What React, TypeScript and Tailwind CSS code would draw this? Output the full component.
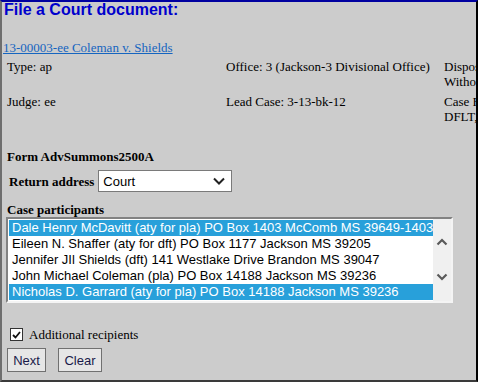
import React from 'react';

const participants = [
  { text: 'Dale Henry McDavitt (aty for pla) PO Box 1403 McComb MS 39649-1403', selected: true },
  { text: 'Eileen N. Shaffer (aty for dft) PO Box 1177 Jackson MS 39205', selected: false },
  { text: 'Jennifer JIl Shields (dft) 141 Westlake Drive Brandon MS 39047', selected: false },
  { text: 'John Michael Coleman (pla) PO Box 14188 Jackson MS 39236', selected: false },
  { text: 'Nicholas D. Garrard (aty for pla) PO Box 14188 Jackson MS 39236', selected: true },
];

const serif = "font-['Liberation_Serif','Times_New_Roman',serif]";
const sans = "font-['Liberation_Sans',Arial,sans-serif]";

export default function App() {
  return (
    <div className="w-[478px] h-[382px] bg-[#cccccc] border-t-2 border-t-[#0000a0] border-l-2 border-l-[#6e6e6e] border-r-2 border-r-black border-b-2 border-b-[#3a3a3a] overflow-hidden text-black">
      <h1 className={`${sans} text-[16px] leading-[16px] font-bold text-[#0000cc] pl-[2px]`}>
        File a Court document:
      </h1>

      <div className={`${serif} text-[13px] leading-[15px]`}>
        <a href="#" className="block mt-[22px] pl-[1px] text-[#1565c0] underline">
          13-00003-ee Coleman v. Shields
        </a>

        <div className="mt-[4px] pl-[5px] grid grid-cols-[219px_218px_219px] w-[700px] gap-y-[5px]">
          <div>Type: ap</div>
          <div>Office: 3 (Jackson-3 Divisional Office)</div>
          <div className="w-[140px]">Disposition: Dismissed Without</div>
          <div>Judge: ee</div>
          <div>Lead Case: 3-13-bk-12</div>
          <div className="w-[90px]">Case Flags: DFLT, CLOSED</div>
        </div>

        <div className="mt-[25px] pl-[5px] font-bold">Form AdvSummons2500A</div>

        <div className="mt-[6px] pl-[7px] flex items-center gap-[4px]">
          <span className="font-bold">Return address</span>
          <div className={`${sans} w-[134px] h-[22px] bg-white border border-[#7a7a7a] flex items-center justify-between pl-[4px] pr-[6px] text-[13px]`}>
            <span>Court</span>
            <svg width="12" height="8" viewBox="0 0 12 8">
              <path d="M1 1.5 L6 6.5 L11 1.5" fill="none" stroke="#222" strokeWidth="2" />
            </svg>
          </div>
        </div>

        <div className="mt-[10px] pl-[5px] font-bold">Case participants</div>

        <div className="ml-[4px] w-[447px] h-[86px] border-2 border-t-[#828282] border-l-[#828282] border-b-[#f4f4f4] border-r-[#f4f4f4] bg-white flex">
          <div className={`${sans} flex-1 pl-[1px] pt-[1px] text-[13px] leading-[16px]`}>
            {participants.map((p) => (
              <div
                key={p.text}
                className={`h-[16px] pl-[3px] whitespace-nowrap overflow-hidden ${p.selected ? 'bg-[#28a0da] text-white' : 'text-black'}`}
              >
                {p.text}
              </div>
            ))}
          </div>
          <div className="w-[18px] bg-[#f0f0f0] flex flex-col items-center justify-between pt-[19px] pb-[20px]">
            <svg width="12" height="8" viewBox="0 0 12 8">
              <path d="M1.5 6.5 L6 2 L10.5 6.5" fill="none" stroke="#5a5a5a" strokeWidth="2.2" />
            </svg>
            <svg width="12" height="8" viewBox="0 0 12 8">
              <path d="M1.5 1.5 L6 6 L10.5 1.5" fill="none" stroke="#5a5a5a" strokeWidth="2.2" />
            </svg>
          </div>
        </div>

        <label className="mt-[24px] pl-[8px] h-[15px] flex items-center gap-[6px]">
          <span className="w-[13px] h-[13px] border border-[#333] bg-white flex items-center justify-center">
            <svg width="9" height="8" viewBox="0 0 9 8">
              <path d="M1 4 L3.5 6.5 L8 1" fill="none" stroke="#111" strokeWidth="1.8" />
            </svg>
          </span>
          <span>Additional recipients</span>
        </label>

        <div className={`${sans} mt-[6px] pl-[5px] flex gap-[12px] text-[13px]`}>
          <button className="w-[39px] h-[24px] bg-[#e6e6e6] border border-[#707070] text-[#1a1a4a]">Next</button>
          <button className="w-[44px] h-[24px] bg-[#e6e6e6] border border-[#707070] text-[#1a1a4a]">Clear</button>
        </div>
      </div>
    </div>
  );
}
